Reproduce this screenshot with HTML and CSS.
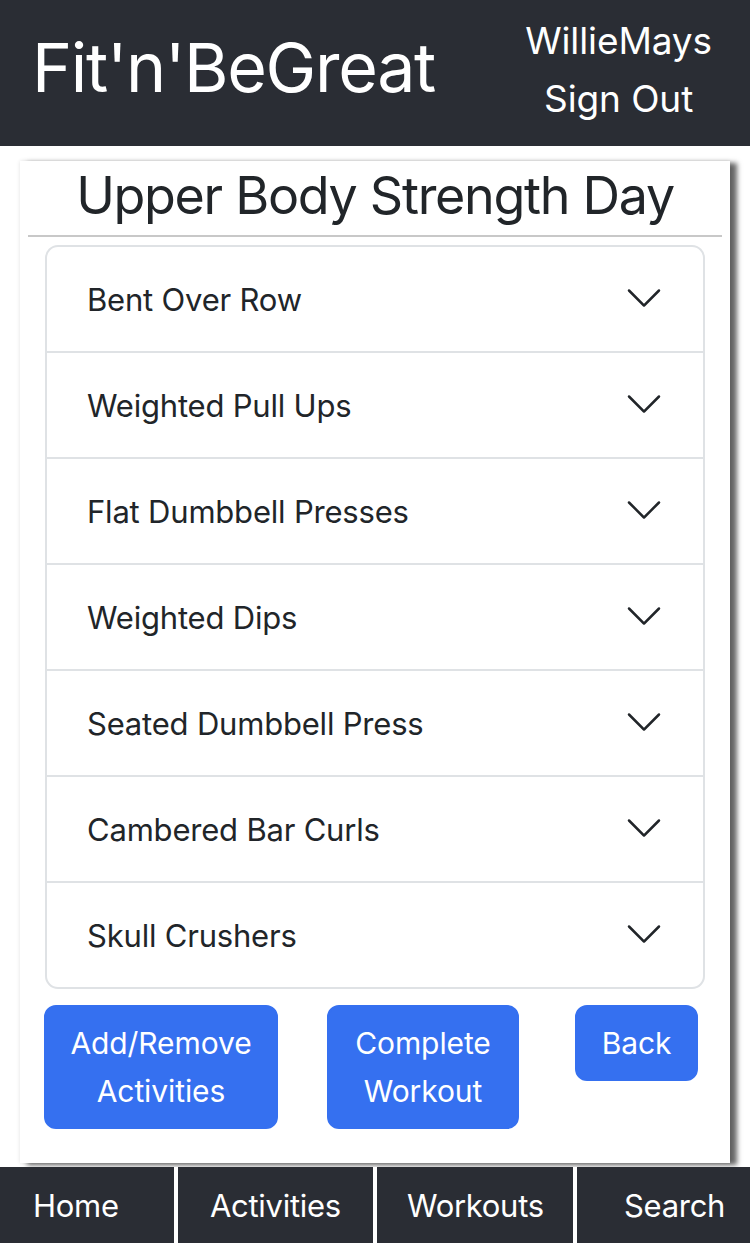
FILE: index.html
```html
<!DOCTYPE html>
<html lang="en">
<head>
<meta charset="utf-8">
<title>Fit'n'BeGreat</title>
<link rel="stylesheet" href="styles.css">
</head>
<body>
<header class="topbar">
  <div class="brand">Fit'n'BeGreat</div>
  <div class="user">
    <div class="user-name">WillieMays</div>
    <div class="user-signout">Sign Out</div>
  </div>
</header>
<main class="page">
  <section class="card">
    <h1 class="card-title">Upper Body Strength Day</h1>
    <hr class="divider">
    <div class="accordion">
      <div class="acc-item"><span class="acc-label">Bent Over Row</span><svg class="chev" viewBox="0 0 16 16"><path fill="#212529" fill-rule="evenodd" d="M1.646 4.646a.5.5 0 0 1 .708 0L8 10.293l5.646-5.647a.5.5 0 0 1 .708.708l-6 6a.5.5 0 0 1-.708 0l-6-6a.5.5 0 0 1 0-.708z"/></svg></div>
      <div class="acc-item"><span class="acc-label">Weighted Pull Ups</span><svg class="chev" viewBox="0 0 16 16"><path fill="#212529" fill-rule="evenodd" d="M1.646 4.646a.5.5 0 0 1 .708 0L8 10.293l5.646-5.647a.5.5 0 0 1 .708.708l-6 6a.5.5 0 0 1-.708 0l-6-6a.5.5 0 0 1 0-.708z"/></svg></div>
      <div class="acc-item"><span class="acc-label">Flat Dumbbell Presses</span><svg class="chev" viewBox="0 0 16 16"><path fill="#212529" fill-rule="evenodd" d="M1.646 4.646a.5.5 0 0 1 .708 0L8 10.293l5.646-5.647a.5.5 0 0 1 .708.708l-6 6a.5.5 0 0 1-.708 0l-6-6a.5.5 0 0 1 0-.708z"/></svg></div>
      <div class="acc-item"><span class="acc-label">Weighted Dips</span><svg class="chev" viewBox="0 0 16 16"><path fill="#212529" fill-rule="evenodd" d="M1.646 4.646a.5.5 0 0 1 .708 0L8 10.293l5.646-5.647a.5.5 0 0 1 .708.708l-6 6a.5.5 0 0 1-.708 0l-6-6a.5.5 0 0 1 0-.708z"/></svg></div>
      <div class="acc-item"><span class="acc-label">Seated Dumbbell Press</span><svg class="chev" viewBox="0 0 16 16"><path fill="#212529" fill-rule="evenodd" d="M1.646 4.646a.5.5 0 0 1 .708 0L8 10.293l5.646-5.647a.5.5 0 0 1 .708.708l-6 6a.5.5 0 0 1-.708 0l-6-6a.5.5 0 0 1 0-.708z"/></svg></div>
      <div class="acc-item"><span class="acc-label">Cambered Bar Curls</span><svg class="chev" viewBox="0 0 16 16"><path fill="#212529" fill-rule="evenodd" d="M1.646 4.646a.5.5 0 0 1 .708 0L8 10.293l5.646-5.647a.5.5 0 0 1 .708.708l-6 6a.5.5 0 0 1-.708 0l-6-6a.5.5 0 0 1 0-.708z"/></svg></div>
      <div class="acc-item"><span class="acc-label">Skull Crushers</span><svg class="chev" viewBox="0 0 16 16"><path fill="#212529" fill-rule="evenodd" d="M1.646 4.646a.5.5 0 0 1 .708 0L8 10.293l5.646-5.647a.5.5 0 0 1 .708.708l-6 6a.5.5 0 0 1-.708 0l-6-6a.5.5 0 0 1 0-.708z"/></svg></div>
    </div>
    <div class="actions">
      <button class="btn btn-add">Add/Remove<br>Activities</button>
      <button class="btn btn-complete">Complete<br>Workout</button>
      <button class="btn btn-back">Back</button>
    </div>
  </section>
</main>
<nav class="bottom-nav">
  <a class="nav-item nav-home">Home</a>
  <a class="nav-item nav-activities">Activities</a>
  <a class="nav-item nav-workouts">Workouts</a>
  <a class="nav-item nav-search">Search</a>
</nav>
</body>
</html>
```
FILE: styles.css
```css
* { box-sizing: border-box; }
html, body { margin: 0; padding: 0; }
body {
  font-family: "Inter", "Noto Sans", sans-serif;
  color: #212529;
  background: #ffffff;
  width: 750px;
  overflow: hidden;
}
.topbar {
  height: 146px;
  background: #2a2d34;
  color: #ffffff;
  display: flex;
  align-items: center;
  justify-content: space-between;
  padding: 0 38px 0 32px;
}
.brand {
  font-size: 68px;
  line-height: 1;
  letter-spacing: -1.3px;
  margin-top: -12px;
}
.user {
  text-align: center;
  font-size: 37px;
  line-height: 58px;
  letter-spacing: -0.1px;
  margin-top: -6px;
}
.page {
  padding: 15px 20px 4px 20px;
}
.card {
  width: 710px;
  background: #ffffff;
  box-shadow: 7px 2px 5px rgba(0, 0, 0, 0.6), 0 0 4px rgba(0, 0, 0, 0.12);
  padding: 0 8px 34px;
}
.card-title {
  margin: 0;
  height: 74px;
  font-size: 52px;
  font-weight: 400;
  line-height: 70px;
  letter-spacing: -1.3px;
  text-align: center;
  color: #212529;
}
.divider {
  margin: 0;
  border: 0;
  height: 2px;
  background: #c8c8c8;
}
.accordion {
  margin: 8px 17px 0;
  border: 2px solid #dfe2e5;
  border-radius: 13px;
  overflow: hidden;
}
.acc-item {
  height: 104px;
  display: flex;
  align-items: center;
  justify-content: space-between;
  padding: 0 39px 0 40px;
}
.acc-item + .acc-item {
  border-top: 2px solid #dfe2e5;
  height: 106px;
}
.acc-label {
  font-size: 31px;
  letter-spacing: -0.2px;
  color: #212529;
}
.chev {
  width: 40px;
  height: 40px;
  margin-top: -2px;
}
.actions {
  display: flex;
  align-items: flex-start;
  margin-top: 16px;
  padding-left: 16px;
}
.btn {
  font-family: inherit;
  font-size: 30px;
  line-height: 48px;
  letter-spacing: -0.1px;
  color: #ffffff;
  background: #3570f0;
  border: 2px solid #3570f0;
  border-radius: 12px;
  padding: 12px 24px;
  text-align: center;
}
.btn-add { width: 234px; padding: 12px 0; }
.btn-complete { margin-left: 49px; width: 192px; padding: 12px 0; }
.btn-back { margin-left: 56px; width: 123px; padding: 12px 0; }
.bottom-nav {
  display: grid;
  grid-template-columns: 174px 195px 196px 1fr;
  column-gap: 4px;
  background: #ffffff;
  height: 76px;
}
.nav-item {
  background: #2a2d34;
  color: #ffffff;
  font-size: 31px;
  letter-spacing: -0.3px;
  display: flex;
  align-items: center;
  text-decoration: none;
}
.nav-home { padding-left: 33px; }
.nav-activities { padding-left: 32px; }
.nav-workouts { padding-left: 30px; }
.nav-search { padding-left: 47px; }
```
